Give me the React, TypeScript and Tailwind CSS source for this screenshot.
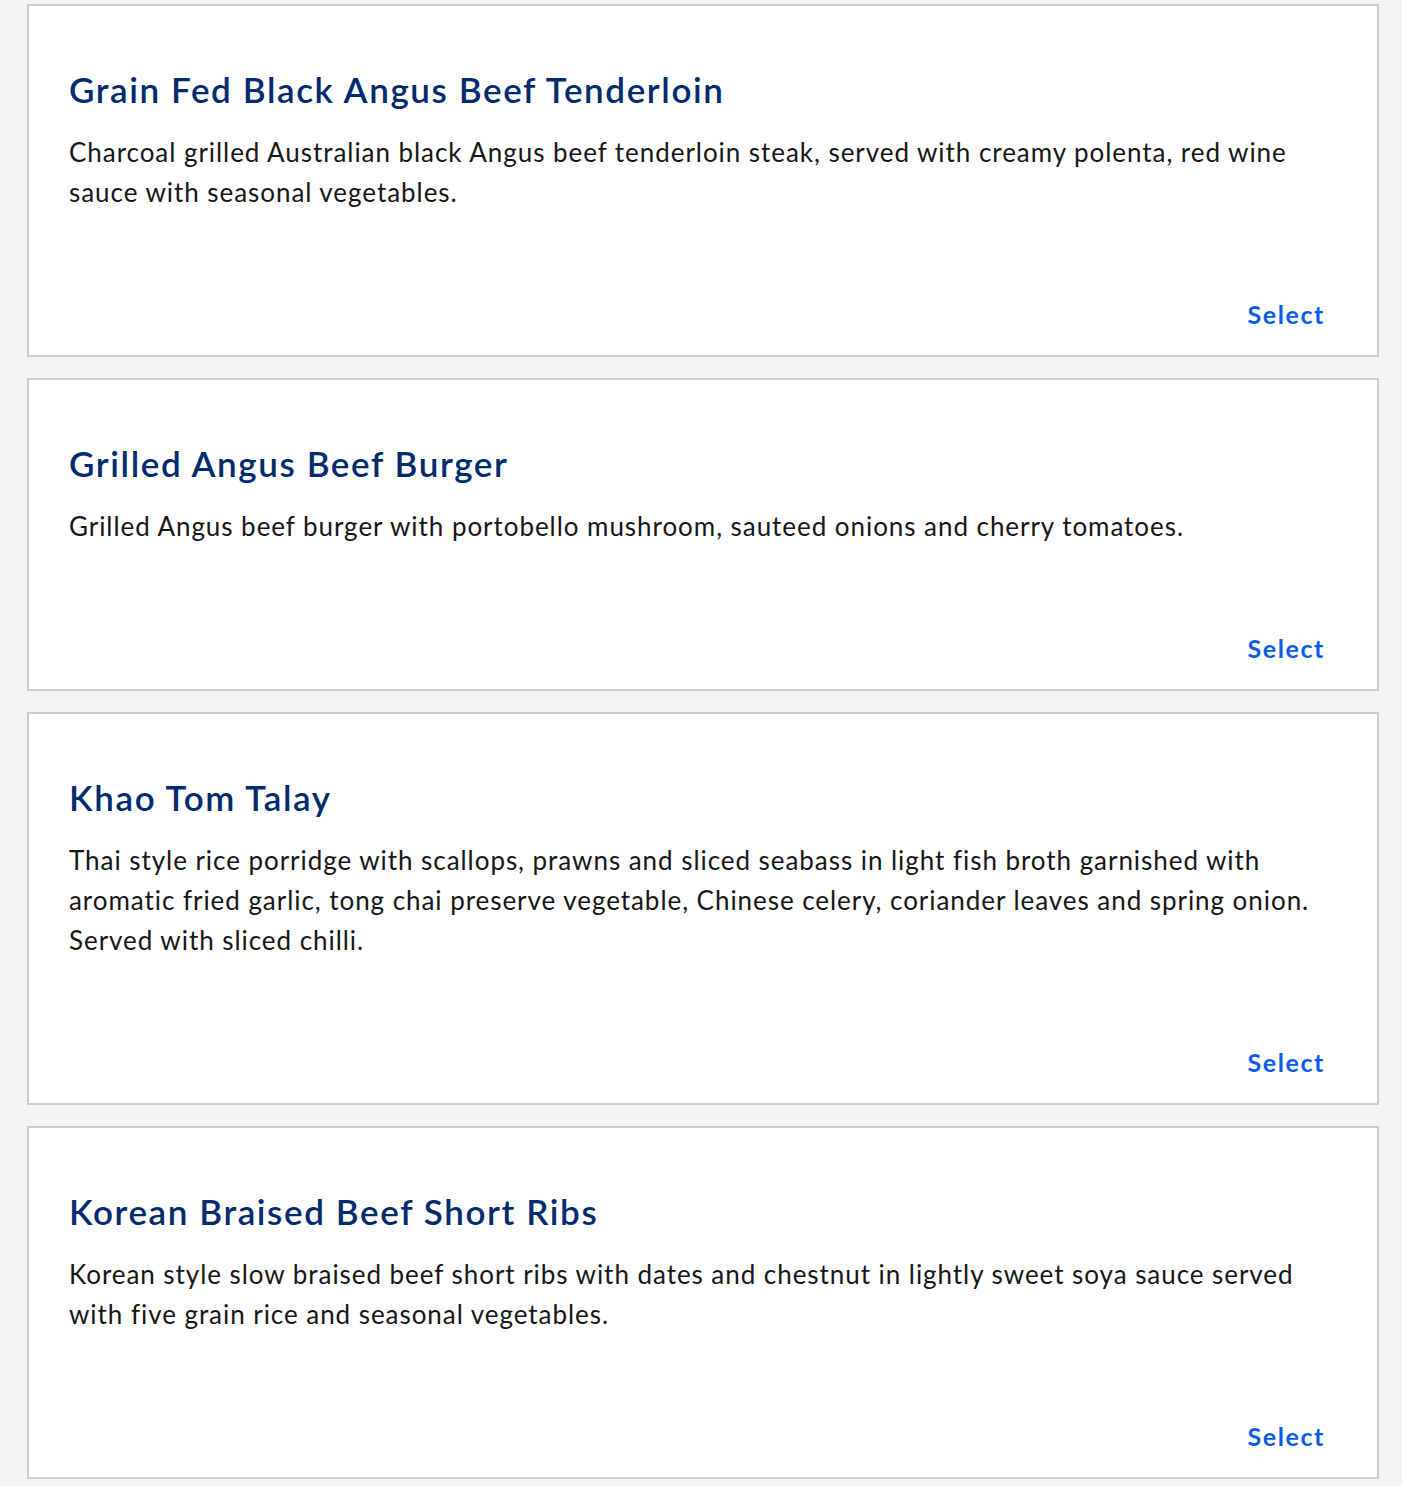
const dishes = [
  {
    title: 'Grain Fed Black Angus Beef Tenderloin',
    desc: 'Charcoal grilled Australian black Angus beef tenderloin steak, served with creamy polenta, red wine sauce with seasonal vegetables.',
  },
  {
    title: 'Grilled Angus Beef Burger',
    desc: 'Grilled Angus beef burger with portobello mushroom, sauteed onions and cherry tomatoes.',
  },
  {
    title: 'Khao Tom Talay',
    desc: 'Thai style rice porridge with scallops, prawns and sliced seabass in light fish broth garnished with aromatic fried garlic, tong chai preserve vegetable, Chinese celery, coriander leaves and spring onion. Served with sliced chilli.',
  },
  {
    title: 'Korean Braised Beef Short Ribs',
    desc: 'Korean style slow braised beef short ribs with dates and chestnut in lightly sweet soya sauce served with five grain rice and seasonal vegetables.',
  },
];

function DishCard({ title, desc }: { title: string; desc: string }) {
  return (
    <div className="bg-white border-2 border-[#cccccc] pt-[63px] pl-[40px] pr-[40px] pb-[20px] flex flex-col">
      <h3 className="text-[35px] leading-[40px] font-semibold tracking-[1.6px] text-[#002b6e]">{title}</h3>
      <p className="mt-[23px] text-[26px] leading-[40px] tracking-[0.95px] text-[#161616]">{desc}</p>
      <div className="mt-[83px] flex justify-end">
        <button className="h-[40px] px-3 text-[25px] font-bold tracking-[1.6px] text-[#0a5ce8]">Select</button>
      </div>
    </div>
  );
}

export default function App() {
  return (
    <div
      className="min-h-[1486px] bg-[#f4f4f4] pt-[4px] pl-[27px] pr-[23px] pb-[7px] flex flex-col gap-[21px]"
      style={{ fontFamily: 'Lato, "Open Sans", sans-serif' }}
    >
      {dishes.map((d) => (
        <DishCard key={d.title} title={d.title} desc={d.desc} />
      ))}
    </div>
  );
}
